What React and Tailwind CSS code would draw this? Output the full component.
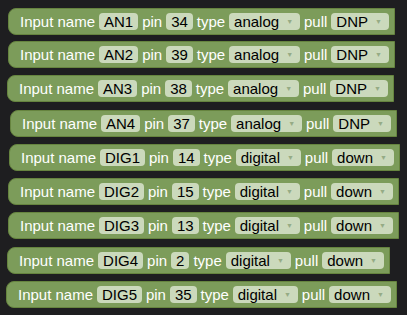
const blocks = [
  { name: "AN1", pin: "34", type: "analog", pull: "DNP", pos: "mt-[8px] ml-[8px] w-[387px]" },
  { name: "AN2", pin: "39", type: "analog", pull: "DNP", pos: "mt-[6px] ml-[8px] w-[387px]" },
  { name: "AN3", pin: "38", type: "analog", pull: "DNP", pos: "mt-[7px] ml-[7px] w-[387px]" },
  { name: "AN4", pin: "37", type: "analog", pull: "DNP", pos: "mt-[8px] ml-[10px] w-[387px]" },
  { name: "DIG1", pin: "14", type: "digital", pull: "down", pos: "mt-[7px] ml-[9px] w-[391px]" },
  { name: "DIG2", pin: "15", type: "digital", pull: "down", pos: "mt-[7px] ml-[8px] w-[391px]" },
  { name: "DIG3", pin: "13", type: "digital", pull: "down", pos: "mt-[7px] ml-[8px] w-[391px]" },
  { name: "DIG4", pin: "2", type: "digital", pull: "down", pos: "mt-[8px] ml-[7px] w-[383px]" },
  { name: "DIG5", pin: "35", type: "digital", pull: "down", pos: "mt-[7px] ml-[6px] w-[391px]" },
];

function Field({ children }) {
  return (
    <span className="flex h-[17px] items-center rounded-[4px] bg-[#cbd9bc] px-[5px] text-black">
      {children}
    </span>
  );
}

function Dropdown({ children }) {
  return (
    <span className="flex h-[17px] items-center gap-[7px] rounded-[4px] bg-[#cbd9bc] pl-[5px] pr-[7px] text-black">
      {children}
      <span className="text-[7px] leading-none text-[#95ab85]">▼</span>
    </span>
  );
}

function InputBlock({ item }) {
  return (
    <div
      className={`flex h-[27px] items-center justify-between rounded-l-[8px] border border-[#66843f] bg-[#7c9c5a] pl-[11px] pr-[5px] text-white ${item.pos}`}
    >
      <span>Input name</span>
      <Field>{item.name}</Field>
      <span>pin</span>
      <Field>{item.pin}</Field>
      <span>type</span>
      <Dropdown>{item.type}</Dropdown>
      <span>pull</span>
      <Dropdown>{item.pull}</Dropdown>
    </div>
  );
}

export default function App() {
  return (
    <div className="flex h-[315px] w-[407px] flex-col overflow-hidden bg-[#1e1e20] font-['Liberation_Sans',Arial,sans-serif] text-[15px] leading-none">
      {blocks.map((item) => (
        <InputBlock key={item.name} item={item} />
      ))}
    </div>
  );
}
